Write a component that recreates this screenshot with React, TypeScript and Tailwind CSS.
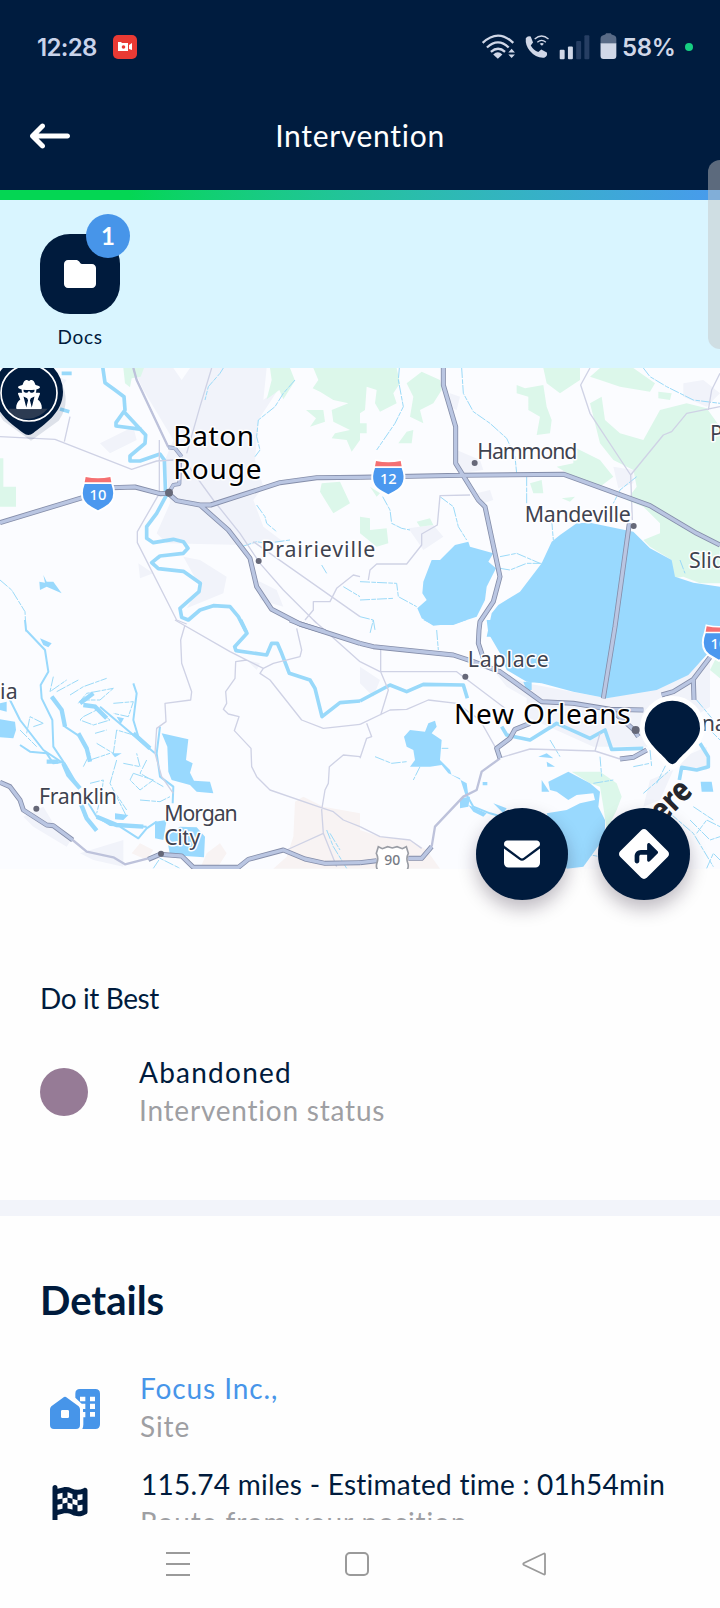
import type { ReactNode } from "react";
import {
  FaArrowLeftLong,
  FaDiamondTurnRight,
  FaEnvelope,
  FaFlagCheckered,
  FaFolder,
  FaUserSecret,
} from "react-icons/fa6";

type LayerProps = {
  a?: string;
  b?: string;
  c?: string;
  d?: string;
  fill?: string;
  stroke?: string;
  width?: number;
  dash?: string;
};

/* The map is stored as four quadrants, each with its own origin. */
function Layer({ a, b, c, d, fill = "none", stroke = "none", width = 0, dash }: LayerProps) {
  return (
    <g fill={fill} stroke={stroke} strokeWidth={width} strokeDasharray={dash} strokeLinejoin="round">
      {a && <path d={a} />}
      {b && <path d={b} transform="translate(1080 0)" />}
      {c && <path d={c} transform="translate(0 780)" />}
      {d && <path d={d} transform="translate(1080 780)" />}
    </g>
  );
}

const urban = {
  a: "M400 24H520L545 60 570 24H800L790 120 840 80 775 180 765 300 790 380 760 420 790 500 850 545 730 555 500 550 470 520 510 430 495 300 520 240 430 90ZM550 590L600 600 680 650 670 700 560 745 600 680ZM0 24H100L200 60 170 100 60 50ZM300 250L400 200 410 240 330 280ZM770 660L830 690 850 740 780 720ZM415 610L460 640 420 655Z",
  b: "M270 100L300 110 290 150 265 140ZM290 270L360 300 370 330 300 340ZM760 320L820 330 820 370 775 385ZM145 505L220 495 250 530 190 570ZM970 70L1030 60 1080 100 1040 140 970 110ZM350 400L390 390 400 420 370 430Z",
  c: "M70 590L130 560 160 610 220 650 200 680 100 620ZM240 700L370 660 370 740 280 720ZM740 120L780 130 770 150Z",
  d: "M500 190L740 235 890 205 1050 110 1050 260 860 380 700 380 500 290ZM870 480L940 450 900 540 850 560ZM0 140L60 180 40 230 0 190ZM400 150L500 190 510 240 440 200ZM950 420L1040 380 1040 450 960 440Z",
};

const park = {
  a: "M370 24H432L422 50 395 55 390 82 375 70ZM810 24H870L885 62 850 118 838 90 800 118 815 60ZM940 24H1080V240L1055 275 1040 240 995 235 1005 220 1050 210 1000 185 995 150 1045 130 1000 120 960 95 938 85 955 60ZM918 150L970 150 975 185 930 200 948 175ZM965 370L1020 365 1050 430 1000 460 960 395ZM0 295H10V380H48V440H0Z",
  b: "M0 24H110L120 70 100 100 110 130 60 155 45 130 50 90 20 80 15 150 0 160ZM140 70L185 35 240 60 245 90 220 130 180 150 190 190 150 170 160 110ZM115 250L140 215 160 210 155 250ZM470 75L495 85 550 75 560 140 575 180 570 220 530 225 540 170 505 150 505 110 470 100ZM550 24H660V60L600 100 560 70ZM690 50L720 24H820L885 70 870 95 780 80 720 60ZM895 95L935 100 930 120 895 115ZM725 110L735 180 780 220 850 240 900 150 980 130 1040 145 1080 200V670L1020 670 970 650 940 655 935 600 870 560 850 540 900 520 900 490 850 440 800 420 830 380 820 330 760 300 720 250 690 130ZM590 320L640 310 640 260 720 300 760 350 720 380 640 350ZM510 370L545 360 550 400 520 400ZM605 415L645 410 630 425ZM170 485L210 475 220 495 180 500ZM0 470L30 475 30 510 80 505 85 550 50 560 0 520ZM0 190H20V220H0ZM30 380L60 400 50 410Z",
  d: "M635 455L720 455 770 490 785 530 770 570 740 630 730 560 720 500 690 490ZM1080 90L1050 150 1080 175Z",
};

const sand = {
  c: "M885 545L910 530 970 560 1080 580V746H820L860 710 880 650ZM660 670L680 700 650 746H600L620 700ZM395 700L420 670 460 690 440 720Z",
  d: "M0 630L60 650 150 660 200 690 240 746H0Z",
};

const lakes = {
  b: "M190 665L215 600H240L285 555 325 545 330 560 400 580 385 605 408 625 380 680 375 720 350 770 290 790 220 797 185 775 172 745 200 720 187 700ZM575 545L600 525 650 490 690 488 820 515 870 565 935 600 945 650 1000 668 1080 680V830H380L395 760 415 735 480 695 545 610Z",
  c: "M485 340L565 358 558 420 578 430 570 458 582 482 630 485 640 520 590 515 570 495 515 480 505 455 502 380ZM500 650L540 620 590 622 615 650 612 712 510 705ZM465 605L500 600 490 660 465 655ZM0 250L20 245 20 275 0 270ZM0 298L45 305 48 330 40 355 0 352ZM120 55L155 70 145 82 130 75ZM350 290L372 295 362 312ZM335 400L365 400 345 412ZM345 580L385 585 370 600 345 598Z",
  d: "M380 0H1080V60L985 165 890 210 740 235 640 215 545 190 500 185 440 150 420 100 385 40ZM190 0H320L280 15 220 15ZM132 350L150 330 195 335 205 310 225 302 230 320 215 340 245 360 240 420 270 450 275 465 320 490 325 525 318 530 300 475 265 460 245 435 210 440 150 440 165 420 160 390 140 380ZM565 485L625 455 690 490 720 515 715 560 735 600 735 650 670 740 620 746 560 580 620 570 660 550 705 540 700 520 650 525 625 540 590 515 570 510ZM545 480L568 515 545 515ZM535 410L560 400 580 415ZM560 425L585 440 562 440ZM300 535L330 530 325 560 300 565ZM400 550L440 565 430 580ZM1022 485L1055 485 1060 515 1025 515ZM490 185L515 187 515 210 500 212ZM325 555L380 580 370 590 340 575ZM368 486H382V496H368Z",
};

const river = {
  a: "M308 20L315 68 345 90 372 110 375 150 348 188 348 198 425 208M372 155L395 180 437 225 435 250 390 288 390 303 420 303 480 282 493 300 497 410 470 460 440 500 440 535 460 548 520 538 550 545 564 565 550 580 480 588 455 608 475 626 550 634 601 670 597 695 540 745 545 772 565 780 600 750 640 737 690 740 715 770 738 815M185 40L215 40M180 147L208 155",
  c: "M722 0L741 40 704 80 708 92 800 105 815 70 832 70 845 100 868 160 930 180 945 205 966 290 1020 248 1080 243",
  d: "M0 243L90 195 140 215 190 193 310 195 322 235M425 320L440 345 510 360 590 310 690 355 735 330 755 388 850 385M958 480L965 442 1010 450 1045 440 1045 410 1020 370",
};

const bayous = {
  c: "M75 0L78 30 135 90 145 155 122 195 125 235 157 300 160 380 200 440 235 500M155 230L185 270 195 320 240 350 262 385 270 420M30 240L60 300 130 390 190 430M60 375L90 395 140 400 160 430 190 425M265 550L290 590 330 615 440 620M240 540L255 590 290 630M360 620L415 655 440 625 470 605M300 260L400 345 465 400M400 190L410 220 400 300 415 350M480 320L470 400 480 470 520 500 518 550",
  d: "M435 628L530 612 550 605M320 525L340 560 390 580 460 600",
};

const creeks = {
  a: "M0 660L35 690 75 755 78 815M670 24L660 40 625 80 615 120M885 60L850 100 825 140 775 180 770 230 780 270 765 290M770 435L795 470 800 490 830 515M725 560L770 545 800 550 870 540M965 615L980 640M1030 680L1080 710",
  b: "M118 24L115 60 130 140 105 190 50 270M68 410L90 450 95 490 125 505 150 510M305 24L310 100 340 155 390 190 440 235 465 290 470 340 500 350 500 430M850 24L870 50 920 80 1000 120 1080 130M240 410L280 440 295 500 320 540M420 590L470 580 540 610M420 625L450 630 500 610 545 610M575 480L580 540M830 350L780 390 760 430M960 600L975 640M0 665L110 670 115 710 170 740M0 770L40 780 30 820M0 720L100 715",
  c: "M160 170L150 215 200 180M170 215L235 180M210 225L250 200 320 175M235 250L260 220 340 205 300 240 250 240M250 290L290 270 330 300 280 315 240 300ZM340 250L400 245 385 290 340 280M130 310L90 290 80 340M290 370L340 400 350 330 400 345M350 420L330 490 380 590M370 430L420 440 410 400M400 460L460 480 420 510 390 480ZM270 490L310 480 305 520 290 580M420 540L480 545 510 530M340 510L380 570M100 320L130 310M270 420L330 400M440 420L420 460 490 500M460 745L480 715 540 745M980 630L1000 680 1040 745M990 640L1020 690M250 440L270 400M285 340L320 330M60 330L110 380",
  d: "M45 410L95 430 140 425M180 440L160 480M245 385L265 385M230 30L235 90M570 360L600 410M700 490L760 480M720 410L725 470M850 520L930 450M870 390L875 440M660 720L700 690M930 580L1000 640 1060 740M1000 560L1060 600M920 430L890 490M980 360L1010 350M40 0L45 30M820 440L870 430M1010 640L1040 600 1080 620M1040 745L1060 700 1080 720M990 600L1050 660 1080 650M680 670L720 640M665 700L720 710M1050 330L1080 360M1010 240L1060 300",
};

const minor = {
  a: "M0 230L165 238 395 328 470 303 520 300M210 170L193 245M400 24L410 60 505 262M635 24L600 140 560 280M478 240V400L412 515V548L530 780 560 792M545 290L640 420 720 520 780 610 850 690 950 790M915 780L940 750 940 725 990 725 1010 685 1060 645 1080 650M760 545L1080 770",
  b: "M690 24L662 75 690 160 812 345 817 480M812 345L910 225 935 215 980 160 1080 140M1080 40L1055 90 1045 150M330 405L240 407 232 495 185 522 185 555 140 612 50 612 30 630 25 660",
  c: "M525 0L690 95 790 145 820 130 900 110 905 90 890 25M555 15L542 60 545 130 575 215 572 240 495 250 498 305 470 325 465 400 485 470 520 520M740 120L707 125 705 175 677 215 680 250 670 268 685 282 717 290 703 332 753 385 755 440 770 470 810 510 970 565 1000 575 1030 600 1080 620M790 145L780 160 810 180 905 300 970 325 1080 313M1080 410L1030 405 988 440 985 490 975 510 965 570 970 640 1010 740M970 640L860 690M940 0L1080 125",
  d: "M0 125L60 155 290 155 435 265M62 90L62 155 85 210 62 285M0 313L90 270 140 268 205 240 290 250 360 300 405 380M20 310L35 350 20 355 0 415M425 412L510 387 705 393 720 340M705 393L780 417M0 620L60 650 150 660 185 685",
};

const mediumRoad = {
  a: "M400 24L410 60 505 262",
  c: "M218 660L260 695 340 712 375 733 445 715",
  d: "M215 680L225 620 310 530 350 510 365 455 420 415",
};

const highway = {
  a: "M0 488L250 412M335 383L405 381 480 401 505 400 530 422 600 435 632 435 840 368 950 353 1080 352M600 435L685 510 750 595 770 680 815 748 900 792 975 815",
  b: "M0 352L300 346 612 343 870 437 1010 520 1080 555M250 24V75L287 200V310L355 420 375 440 420 650 400 725 360 785 357 810 355 850 370 895M808 490L765 800 730 1015",
  c: "M870 0L900 12 1080 70M0 487L30 500 60 540 70 570 140 615 160 617 218 660M445 718L480 703 545 708 580 742 715 742 745 718 850 690 915 717 975 730 1080 728",
  d: "M0 70L40 80 280 105 340 125 420 155 545 245 640 250 750 268 850 270M905 225L940 215 1000 178 1050 112M1000 178L1002 240M780 417L820 412 860 390M510 310L465 328 450 355 410 385 420 415M0 728L50 722M145 715L185 715 215 680M760 275L820 328 835 350",
};

const spur = { a: "M508 395L520 375 538 372 540 300M505 262L525 265 545 290" };

type LabelProps = {
  x: number;
  y: number;
  length?: number;
  size?: number;
  color?: string;
  children: ReactNode;
};

function Label({ x, y, length, size = 64, color = "#3f4350", children }: LabelProps) {
  return (
    <text
      x={x}
      y={y}
      fontSize={size}
      textLength={length}
      fill={color}
      stroke="#fff"
      strokeWidth={9}
      strokeLinejoin="round"
      paintOrder="stroke"
    >
      {children}
    </text>
  );
}

function Shield({ x, y, children }: { x: number; y: number; children: ReactNode }) {
  return (
    <g transform={`translate(${x} ${y})`}>
      <path
        d="M-36 -50Q0 -42 36 -50L40 -32Q60 22 18 41L0 51 -18 41Q-60 22 -40 -32Z"
        fill="#fff"
        stroke="#fff"
        strokeWidth="10"
      />
      <path d="M-40 -29H40Q58 20 18 40L0 50 -18 40Q-58 20 -40 -29Z" fill="#4b98ef" />
      <path d="M-37 -50Q0 -43 37 -50L40 -34H-40Z" fill="#f57072" />
      <text y="19" fontSize="44" fontWeight="500" fill="#fff" textAnchor="middle">
        {children}
      </text>
    </g>
  );
}

function RegionMap() {
  return (
    <svg viewBox="0 24 2160 1503" className="block h-[501px] w-[720px] font-['Noto_Sans',sans-serif]">
      <rect y="24" width="2160" height="1503" fill="#fbfcff" />
      <Layer {...urban} fill="#f1f3fa" />
      <Layer {...park} fill="#dcf7ea" />
      <Layer {...sand} fill="#f8f3f3" />
      <Layer {...creeks} stroke="#9bdaf8" width={3} dash="30 4 14 3" />
      <Layer {...bayous} stroke="#99d9fc" width={6} />
      <path d="M130 645L140 665 160 665 185 700 140 680 120 690 118 665 135 668Z" fill="#99d9fc" />
      <path
        d="M155 1010L185 1050 195 1100M240 1030L280 1000M250 1035L285 1040 320 1075M235 1120L260 1165 270 1205M190 1210L205 1245 240 1285M240 1325L260 1375 290 1412M290 1370L350 1395 430 1400M400 1120L450 1165M140 1205H175"
        fill="none"
        stroke="#99d9fc"
        strokeWidth="13"
      />
      <Layer {...lakes} fill="#99d9fe" />
      <Layer {...river} stroke="#99d9fa" width={11} />
      <Layer {...minor} stroke="#cfd2e5" width={4} />
      <Layer {...mediumRoad} stroke="#bdc2db" width={7} />
      <Layer {...spur} stroke="#8c97b5" width={12} />
      <Layer {...spur} stroke="#bcc8e3" width={8} />
      <Layer {...highway} stroke="#858eaa" width={15} />
      <Layer {...highway} stroke="#bac6e2" width={10} />

      <g fill="#666878">
        <circle cx="507" cy="398" r="12" />
        <circle cx="776" cy="603" r="9" />
        <circle cx="1424" cy="309" r="9" />
        <circle cx="1901" cy="498" r="9" />
        <circle cx="1396" cy="950" r="9" />
        <circle cx="109" cy="1346" r="9" />
        <circle cx="483" cy="1481" r="9" />
        <circle cx="1907" cy="1110" r="12" />
      </g>

      <Shield x={294} y={401}>10</Shield>
      <Shield x={1165} y={353}>12</Shield>
      <Shield x={2157} y={849}>10</Shield>
      <g transform="translate(1177 1500)">
        <path
          d="M-42 -40L-30 -34 -14 -40 0 -36 14 -40 30 -34 42 -40 48 -20Q40 -5 47 12Q52 34 24 40L0 50 -24 40Q-52 34 -47 12Q-40 -5 -48 -20Z"
          fill="#fff"
          stroke="#9a9da5"
          strokeWidth="5"
        />
        <text y="16" fontSize="42" fontWeight="500" fill="#777b85" textAnchor="middle">
          90
        </text>
      </g>

      <Label x={520} y={257} size={84} length={242} color="#000">Baton</Label>
      <Label x={520} y={358} size={84} length={265} color="#000">Rouge</Label>
      <Label x={784} y={590} length={342}>Prairieville</Label>
      <Label x={1432} y={297} length={300}>Hammond</Label>
      <Label x={1574} y={486} length={318}>Mandeville</Label>
      <Label x={2067} y={624}>Slidell</Label>
      <Label x={2130} y={243}>Picayune</Label>
      <Label x={1403} y={922} length={243}>Laplace</Label>
      <Label x={1362} y={1091} size={84} length={530} color="#000">New Orleans</Label>
      <Label x={2105} y={1112}>na</Label>
      <Label x={0} y={1016} length={53}>ia</Label>
      <Label x={117} y={1331} length={234}>Franklin</Label>
      <Label x={493} y={1383} length={220}>Morgan</Label>
      <Label x={493} y={1456} length={108}>City</Label>
      <text
        transform="translate(1988 1392) rotate(-45)"
        fontSize="100"
        fontWeight="800"
        textLength="133"
        lengthAdjust="spacingAndGlyphs"
        fill="#25262c"
        stroke="#fff"
        strokeWidth="6"
        paintOrder="stroke"
      >
        ere
      </text>

      <path
        d="M85 232L2 172A104 104 0 1 1 168 172Z"
        fill="#0b2447"
        opacity="0.12"
        transform="translate(8 10)"
      />
      <path d="M70 219C42 196 -19 160 -19 95A104 104 0 0 1 189 95C189 160 128 196 100 219Q85 231 70 219Z" fill="#001b3d" />
      <path d="M28 146H143A84 84 0 0 1 28 160Z" fill="#2c3b52" />
      <circle cx="87" cy="99" r="84" fill="none" stroke="#fff" strokeWidth="5" />
      <g transform="translate(43 60)">
        <FaUserSecret size={88} color="#fff" />
      </g>
      <path
        d="M2005 1206C1982 1178 1934 1145 1934 1105A83 83 0 0 1 2100 1105C2100 1145 2052 1178 2029 1206Q2017 1219 2005 1206Z"
        fill="#001b3d"
        stroke="#fff"
        strokeWidth="28"
        strokeLinejoin="round"
        paintOrder="stroke"
      />
    </svg>
  );
}

function StatusIcons() {
  return (
    <svg viewBox="365 98 412 82" className="h-[27px] w-[137px]" fill="none" stroke="#d0d7e7">
      <path d="M368 128Q415 84 461 128M381 142Q415 111 447 142M393 155Q415 137 436 155" strokeWidth="7" />
      <path d="M400 163Q414 150 428 163L414 176Z" fill="#d0d7e7" stroke="none" />
      <path d="M456 146L466 157H446ZM446 163H466L456 174Z" fill="#d0d7e7" stroke="none" />
      <path
        d="M499 114Q505 105 514 109L521 127 514 136Q522 150 537 156L546 148 563 157Q566 168 555 173Q530 175 511 152Q497 135 499 114Z"
        fill="#d0d7e7"
        stroke="none"
      />
      <path d="M526 116Q547 98 568 116M534 126Q547 115 560 126" strokeWidth="4" />
      <path d="M541 131Q548 125 554 131L548 137Z" fill="#d0d7e7" stroke="none" />
      <g stroke="none">
        <rect x="602" y="149" width="15" height="29" rx="3" fill="#d0d7e7" />
        <rect x="627" y="139" width="15" height="39" rx="3" fill="#d0d7e7" />
        <rect x="652" y="122" width="15" height="56" rx="3" fill="#263e63" />
        <rect x="677" y="105" width="15" height="73" rx="3" fill="#263e63" />
        <path d="M734 105Q742 104 743 99H757Q758 104 766 105Q774 107 774 116V130H726V116Q726 107 734 105Z" fill="#596b87" />
        <path d="M726 129H774V168Q774 177 765 177H735Q726 177 726 168Z" fill="#d0d7e7" />
      </g>
    </svg>
  );
}

function HomeBuildingIcon() {
  return (
    <svg viewBox="150 387 150 120" className="h-10 w-[50px]" fill="#4795e9">
      <path
        fillRule="evenodd"
        d="M240 387H286Q300 387 300 401V493Q300 507 286 507H247Q250 500 250 493V472H256V456H249V447H256V431H245L226 413V401Q226 387 240 387ZM240 410V424H256V410ZM270 410V424H285V410ZM270 431V447H285V431ZM270 456V470H285V456Z"
      />
      <path
        fillRule="evenodd"
        d="M189 413Q195 408 201 413L236 439Q240 443 240 448V495Q240 507 228 507H162Q150 507 150 495V448Q150 443 154 439ZM187 450Q183 450 183 454V470Q183 474 187 474H203Q207 474 207 470V454Q207 450 203 450Z"
      />
    </svg>
  );
}

export default function App() {
  return (
    <div className="relative flex h-[1608px] w-[720px] flex-col overflow-hidden bg-[#fefefe] font-['Lato',sans-serif] text-[#001b3d]">
      <header className="h-[190px] shrink-0 bg-[#001c3f]">
        <div className="flex h-[94px] items-center pl-[37px] pr-[27px] font-['Inter',sans-serif] text-[#c9d3ea]">
          <span className="w-[60px] whitespace-nowrap pt-px text-[24px] font-semibold tracking-[-0.7px]">12:28</span>
          <span className="ml-4 flex size-6 items-center justify-center rounded-[5px] bg-[#e93a34]">
            <svg viewBox="0 0 16 12" className="h-3 w-4">
              <path d="M1 1H4L5 2H11V10H1ZM12 4L15 2V9L12 8Z" fill="#fff" />
              <circle cx="6.5" cy="6" r="1.8" fill="#e93a34" />
            </svg>
          </span>
          <span className="ml-auto flex items-center">
            <span className="-mt-0.5">
              <StatusIcons />
            </span>
            <span className="ml-1 w-[54px] whitespace-nowrap pt-px text-[24px] font-semibold tracking-[-0.3px] text-[#d0d7e7]">
              58%
            </span>
            <span className="ml-[9px] size-2 rounded-full bg-[#16cf82]" />
          </span>
        </div>
        <div className="grid h-[84px] grid-cols-[100px_1fr_100px] items-center">
          <FaArrowLeftLong className="ml-[30px] size-10 text-white" />
          <h1 className="-mt-0.5 text-center text-[30px] tracking-[0.7px] text-white">Intervention</h1>
        </div>
      </header>
      <div className="h-2.5 shrink-0 bg-linear-to-r from-[#04d653] from-18% to-[#479ceb] to-98%" />

      <section className="h-[168px] shrink-0 bg-[#d9f5ff] px-10 pt-[34px]">
        <div className="flex w-20 flex-col items-center">
          <div className="relative flex size-20 items-center justify-center rounded-[30px] bg-[#001b3d]">
            <FaFolder className="size-8 text-white" />
            <span className="absolute -top-5 left-[46px] flex size-11 items-center justify-center rounded-full bg-[#4795e9] text-2xl font-bold text-white">
              1
            </span>
          </div>
          <span className="mt-2 text-[19px] leading-[30px] tracking-[0.7px]">Docs</span>
        </div>
      </section>

      <section className="relative h-[501px] shrink-0">
        <RegionMap />
        <div className="absolute -bottom-[31px] right-[30px] flex gap-[30px] text-white">
          <button className="flex size-[92px] items-center justify-center rounded-full bg-[#001b3d] shadow-[0_9px_18px_rgba(30,15,40,0.28)]">
            <FaEnvelope className="size-9" />
          </button>
          <button className="flex size-[92px] items-center justify-center rounded-full bg-[#001b3d] shadow-[0_9px_18px_rgba(30,15,40,0.28)]">
            <FaDiamondTurnRight className="size-[50px]" />
          </button>
        </div>
      </section>

      <section className="h-[331px] shrink-0 px-10 pt-[111px] text-[28px]">
        <h2 className="leading-9 tracking-[-0.4px]">Do it Best</h2>
        <div className="mt-[37px] flex items-center leading-[38px]">
          <span className="mt-0.5 size-12 rounded-full bg-[#967b96]" />
          <div className="ml-[51px]">
            <p className="tracking-[1.25px]">Abandoned</p>
            <p className="tracking-[0.78px] text-[#9e9fa3]">Intervention status</p>
          </div>
        </div>
      </section>
      <div className="h-4 shrink-0 bg-[#f2f4fa]" />

      <section className="h-[304px] shrink-0 overflow-hidden px-10 pt-[60px] text-[28px] leading-[38px]">
        <h2 className="text-[40px] font-bold leading-[48px]">Details</h2>
        <div className="mt-[45px] flex">
          <span className="ml-2.5 mt-5 w-[90px]">
            <HomeBuildingIcon />
          </span>
          <div className="tracking-[0.9px]">
            <p className="text-[#4795e9]">Focus Inc.,</p>
            <p className="text-[#9e9fa3]">Site</p>
          </div>
        </div>
        <div className="mt-5 flex">
          <span className="ml-2.5 mt-5 w-[90px]">
            <FaFlagCheckered className="size-10" />
          </span>
          <div className="whitespace-nowrap">
            <p className="pl-px tracking-[0.25px]">115.74 miles - Estimated time : 01h54min</p>
            <p className="tracking-[0.9px] text-[#9e9fa3]">Route from your position</p>
          </div>
        </div>
      </section>

      <nav className="flex h-[88px] shrink-0 items-center bg-[#fefefe] pl-[166px]">
        <svg viewBox="0 0 24 24" className="size-6" stroke="#9a9a9a" strokeWidth="1.8">
          <path d="M0 1H24M0 12H24M0 23H24" />
        </svg>
        <span className="ml-[155px] size-6 rounded-[5px] border-2 border-[#9a9a9a]" />
        <svg viewBox="0 0 24 24" className="ml-[153px] size-6" fill="none" stroke="#9a9a9a" strokeWidth="1.8">
          <path d="M22 1.5Q23 1.2 23 2.5V21.5Q23 22.8 22 22.5L2 13Q.5 12 2 11Z" />
        </svg>
      </nav>

      <span className="absolute -right-3 top-40 h-[189px] w-6 rounded-[12px] bg-[#c4c4c4]/47" />
    </div>
  );
}
